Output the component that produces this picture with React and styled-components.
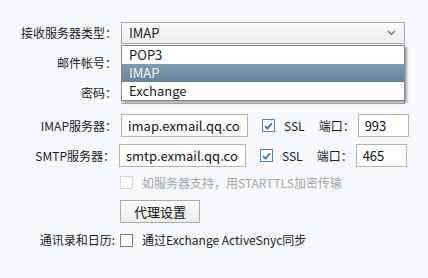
import React from 'react';
import styled, { createGlobalStyle } from 'styled-components';

const GlobalStyle = createGlobalStyle`
  html, body {
    margin: 0;
    padding: 0;
    background: #f7f9fc;
  }
  body {
    font-family: "Noto Sans CJK SC", "Noto Sans", sans-serif;
    font-size: 12px;
    color: #1a1a1a;
  }
`;

const Page = styled.div`
  width: 428px;
  height: 278px;
  padding-top: 22px;
  box-sizing: border-box;
  display: flex;
  flex-direction: column;
`;

const Row = styled.div`
  display: flex;
  align-items: center;
  margin-top: ${({ $top }) => $top || 0}px;
  height: ${({ $h }) => $h || 22}px;
  position: relative;
`;

const Label = styled.label`
  width: ${({ $w }) => $w || 117}px;
  margin-right: ${({ $mr }) => $mr || 4}px;
  text-align: right;
  white-space: nowrap;
  line-height: 16px;
  flex-shrink: 0;
`;

const Spacer = styled.div`
  width: 121px;
  flex-shrink: 0;
`;

const SelectBox = styled.div`
  width: 284px;
  height: 22px;
  box-sizing: border-box;
  border: 1px solid #a9a9a9;
  background: linear-gradient(#fbfbfb, #ececec);
  display: flex;
  align-items: center;
  justify-content: space-between;
  padding: 0 8px 0 7px;
  font-size: 13px;
  line-height: 16px;
`;

const Menu = styled.ul`
  position: absolute;
  left: 121px;
  top: 23px;
  width: 284px;
  margin: 0;
  padding: 0;
  list-style: none;
  box-sizing: border-box;
  border: 1px solid #868686;
  background: #fff;
  box-shadow: 2px 2px 2px rgba(0, 0, 0, 0.35);
  z-index: 2;
`;

const Option = styled.li`
  height: 18px;
  line-height: 18px;
  padding-left: 7px;
  font-size: 13px;
  color: ${({ $active }) => ($active ? '#f2f4f7' : '#1a1a1a')};
  background: ${({ $active }) =>
    $active ? 'linear-gradient(#7e9ab3, #6a829c)' : 'transparent'};
`;

const TextInput = styled.input`
  width: ${({ $w }) => $w || 284}px;
  height: ${({ $h }) => $h || 22}px;
  box-sizing: border-box;
  border: 1px solid #b4b4b4;
  background: #fff;
  padding: 0 6px;
  font: inherit;
  font-size: 13px;
  color: #111;
  outline: none;
`;

const Check = styled.span`
  width: 13px;
  height: 13px;
  box-sizing: border-box;
  border: 1px solid ${({ $tone }) =>
    $tone === 'blue' ? '#4f86be' : $tone === 'off' ? '#d2d4d8' : '#7c7c7c'};
  background: #fff;
  display: inline-flex;
  align-items: center;
  justify-content: center;
  flex-shrink: 0;
  margin-left: ${({ $ml }) => $ml || 0}px;
  margin-right: ${({ $mr }) => $mr || 9}px;
`;

const Text = styled.span`
  line-height: 16px;
  white-space: nowrap;
  color: ${({ $muted }) => ($muted ? '#a3a6aa' : 'inherit')};
  margin-right: ${({ $mr }) => $mr || 0}px;
`;

const Button = styled.button`
  width: 80px;
  height: 23px;
  box-sizing: border-box;
  border: 1px solid #ababab;
  background: linear-gradient(#fdfdfd, #ebebeb);
  font: inherit;
  font-size: 13px;
  color: #111;
  padding: 0;
  margin-left: -1px;
`;

const Tick = () => (
  <svg width="9" height="8" viewBox="0 0 9 8">
    <path d="M1 4.2 L3.4 6.5 L8 1.2" fill="none" stroke="#2a63a6" strokeWidth="1.6" />
  </svg>
);

const Chevron = () => (
  <svg width="9" height="6" viewBox="0 0 9 6">
    <path d="M1 1 L4.5 4.5 L8 1" fill="none" stroke="#6e6e6e" strokeWidth="1.2" />
  </svg>
);

const ServerRow = ({ top, label, host, port, labelW }) => (
  <Row $top={top} $h={23}>
    <Label $w={labelW}>{label}</Label>
    <TextInput $w={127} $h={23} defaultValue={host} />
    <Check $tone="blue" $ml={14}>
      <Tick />
    </Check>
    <Text $mr={14}>SSL</Text>
    <Text $mr={3}>端口：</Text>
    <TextInput $w={51} $h={23} defaultValue={port} />
  </Row>
);

export default function App() {
  return (
    <>
      <GlobalStyle />
      <Page>
        <Row>
          <Label>接收服务器类型：</Label>
          <SelectBox>
            <span>IMAP</span>
            <Chevron />
          </SelectBox>
          <Menu>
            <Option>POP3</Option>
            <Option $active>IMAP</Option>
            <Option>Exchange</Option>
          </Menu>
        </Row>
        <Row $top={8}>
          <Label>邮件帐号：</Label>
          <TextInput />
        </Row>
        <Row $top={8}>
          <Label>密码：</Label>
          <TextInput type="password" />
        </Row>
        <ServerRow top={10} label="IMAP服务器：" host="imap.exmail.qq.com" port="993" />
        <ServerRow top={7} label="SMTP服务器：" labelW={115} host="smtp.exmail.qq.com" port="465" />
        <Row $top={8} $h={15}>
          <Spacer />
          <Check $tone="off" $ml={-1} />
          <Text $muted>如服务器支持，用STARTTLS加密传输</Text>
        </Row>
        <Row $top={10} $h={23}>
          <Spacer />
          <Button>代理设置</Button>
        </Row>
        <Row $top={10} $h={14}>
          <Label $w={115} $mr={5}>通讯录和日历:</Label>
          <Check $tone="gray" />
          <Text>通过Exchange ActiveSnyc同步</Text>
        </Row>
      </Page>
    </>
  );
}
